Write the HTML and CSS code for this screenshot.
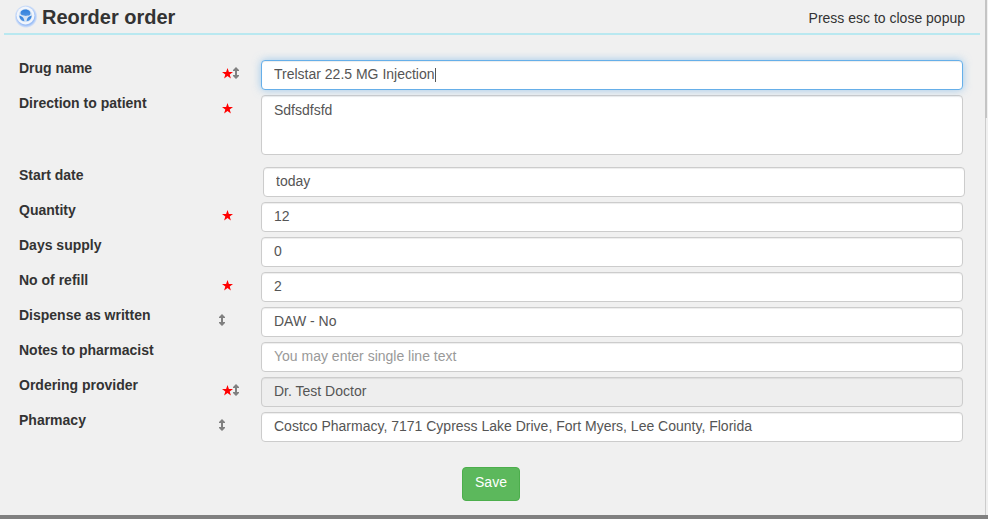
FILE: index.html
```html
<!DOCTYPE html>
<html lang="en">
<head>
<meta charset="utf-8">
<title>Reorder order</title>
<link rel="stylesheet" href="styles.css">
</head>
<body>
<svg class="symbols" aria-hidden="true">
  <symbol id="star" viewBox="0 0 11 11"><path d="M5.5 0 6.9 4H11L7.7 6.4 8.9 10.5 5.5 8 2.1 10.5 3.3 6.4 0 4H4.1Z" fill="#f00"/></symbol>
  <symbol id="updown" viewBox="0 0 6 12"><path d="M3 0 6 3V4H4V8H6V9L3 12 0 9V8H2V4H0V3Z" fill="#808080"/></symbol>
</svg>
<main class="popup">
  <header class="header">
    <svg class="logo" viewBox="0 0 24 24" aria-hidden="true">
      <defs>
        <radialGradient id="halo"><stop offset="0.76" stop-color="#9dbff6"/><stop offset="0.88" stop-color="#c3d7f8"/><stop offset="1" stop-color="#f0f0f0"/></radialGradient>
        <linearGradient id="globe" x1="0" y1="0" x2="0" y2="1"><stop offset="0" stop-color="#2f7edb"/><stop offset="1" stop-color="#4f94e2"/></linearGradient>
      </defs>
      <circle cx="12" cy="12.5" r="11.5" fill="url(#halo)"/>
      <circle cx="11.5" cy="11.5" r="9" fill="#f2f6fc"/>
      <circle cx="11.5" cy="11.5" r="6.8" fill="#d5e3f4"/>
      <path d="M6.4 9.2C6.6 6.6 9 5.4 11.5 5.5C14.8 5.6 16.8 7.6 16.4 9.8C16 11.6 14.4 12 13 11.6C12 12.6 11 11.6 10 11.4C8.2 11.3 6.8 10.8 6.4 9.2Z" fill="url(#globe)"/>
      <path d="M5.4 11.6C7.8 12.6 10.2 13.7 10.4 17.2C7.6 17.2 5.4 14.8 5.4 11.6ZM17.6 11.6C15.2 12.6 12.8 13.7 12.6 17.2C15.4 17.2 17.6 14.8 17.6 11.6Z" fill="url(#globe)"/>
    </svg>
    <h1 class="title">Reorder order</h1>
    <span class="hint">Press esc to close popup</span>
  </header>
  <form class="form">
    <div class="row">
      <label for="drug">Drug name</label>
      <span class="marks"><svg class="star"><use href="#star"/></svg><svg class="updown"><use href="#updown"/></svg></span>
      <span class="field">
        <input class="control active" id="drug" type="text" value="Trelstar 22.5 MG Injection">
        <span class="caret"></span>
      </span>
    </div>
    <div class="row tall">
      <label for="direction">Direction to patient</label>
      <span class="marks"><svg class="star"><use href="#star"/></svg></span>
      <textarea class="control" id="direction">Sdfsdfsfd</textarea>
    </div>
    <div class="row">
      <label for="start">Start date</label>
      <span class="marks"></span>
      <input class="control date" id="start" type="text" value="today">
    </div>
    <div class="row">
      <label for="quantity">Quantity</label>
      <span class="marks"><svg class="star"><use href="#star"/></svg></span>
      <input class="control" id="quantity" type="text" value="12">
    </div>
    <div class="row">
      <label for="days">Days supply</label>
      <span class="marks"></span>
      <input class="control" id="days" type="text" value="0">
    </div>
    <div class="row">
      <label for="refill">No of refill</label>
      <span class="marks"><svg class="star"><use href="#star"/></svg></span>
      <input class="control" id="refill" type="text" value="2">
    </div>
    <div class="row">
      <label for="daw">Dispense as written</label>
      <span class="marks"><svg class="updown"><use href="#updown"/></svg></span>
      <input class="control" id="daw" type="text" value="DAW - No">
    </div>
    <div class="row">
      <label for="notes">Notes to pharmacist</label>
      <span class="marks"></span>
      <input class="control" id="notes" type="text" placeholder="You may enter single line text">
    </div>
    <div class="row">
      <label for="provider">Ordering provider</label>
      <span class="marks"><svg class="star"><use href="#star"/></svg><svg class="updown"><use href="#updown"/></svg></span>
      <input class="control" id="provider" type="text" value="Dr. Test Doctor" readonly>
    </div>
    <div class="row">
      <label for="pharmacy">Pharmacy</label>
      <span class="marks"><svg class="updown"><use href="#updown"/></svg></span>
      <input class="control" id="pharmacy" type="text" value="Costco Pharmacy, 7171 Cypress Lake Drive, Fort Myers, Lee County, Florida">
    </div>
    <button class="save" type="button">Save</button>
  </form>
  <span class="thumb"></span>
</main>
</body>
</html>
```
FILE: styles.css
```css
* {
  box-sizing: border-box;
}

body {
  margin: 0;
  background: #f0f0f0;
  color: #333;
  font: 14px/20px "Liberation Sans", Arial, sans-serif;
}

.symbols {
  position: absolute;
  width: 0;
  height: 0;
}

.popup {
  position: relative;
  display: flex;
  flex-direction: column;
  min-height: 100vh;
  padding-right: 2px;
  border-bottom: 4px solid #808080;
}

.header {
  z-index: 1;
  display: flex;
  align-items: center;
  height: 35px;
  margin: 0 6px 0 4px;
  padding: 0 15px 0 10px;
  border-bottom: 2px solid #b9e8f0;
}

.logo {
  width: 24px;
  height: 24px;
  margin: -2px 4px 0 0;
}

.title {
  flex: 1;
  margin: 0;
  font-size: 20px;
  line-height: 24px;
}

.hint {
  padding-top: 3px;
}

.form {
  flex: 1;
  margin-top: -35px;
  padding: 60px 22px 14px 19px;
  border-right: 1px solid #ccc;
}

.row {
  display: grid;
  grid-template-columns: 200px 42px 1fr;
  align-items: start;
  margin-bottom: 5px;
}

.row label {
  margin-top: -2px;
  font-weight: bold;
}

.marks {
  display: flex;
  align-items: center;
  height: 26px;
}

.star {
  width: 11px;
  height: 11px;
  margin: 1px 0 0 3px;
}

.updown {
  width: 6px;
  height: 12px;
}

.field {
  position: relative;
  display: flex;
}

.caret {
  position: absolute;
  top: 8px;
  left: 174px;
  width: 1px;
  height: 14px;
  background: #555;
}

.control {
  width: 100%;
  height: 30px;
  padding: 4px 12px 6px;
  border: 1px solid #ccc;
  border-radius: 4px;
  outline: 0;
  background: #fff;
  box-shadow: inset 0 1px 1px rgba(0, 0, 0, 0.075);
  color: #555;
  font: inherit;
}

.control::placeholder {
  color: #999;
  opacity: 1;
}

.control[readonly] {
  background: #eee;
}

.active {
  border-color: #66afe9;
  box-shadow: inset 0 1px 1px rgba(0, 0, 0, 0.075), 0 0 8px rgba(102, 175, 233, 0.6);
}

.tall {
  margin-bottom: 12px;
}

.tall .control {
  display: block;
  height: 60px;
  resize: none;
}

.date {
  position: relative;
  left: 2px;
}

.save {
  display: block;
  height: 34px;
  margin: 25px auto 0;
  padding: 4px 12px 8px;
  border: 1px solid #4cae4c;
  border-radius: 4px;
  background: #5cb85c;
  color: #fff;
  font: inherit;
}

.thumb {
  position: absolute;
  top: 0;
  right: 1px;
  width: 2px;
  height: 118px;
  background: #c4c4c4;
}
```
